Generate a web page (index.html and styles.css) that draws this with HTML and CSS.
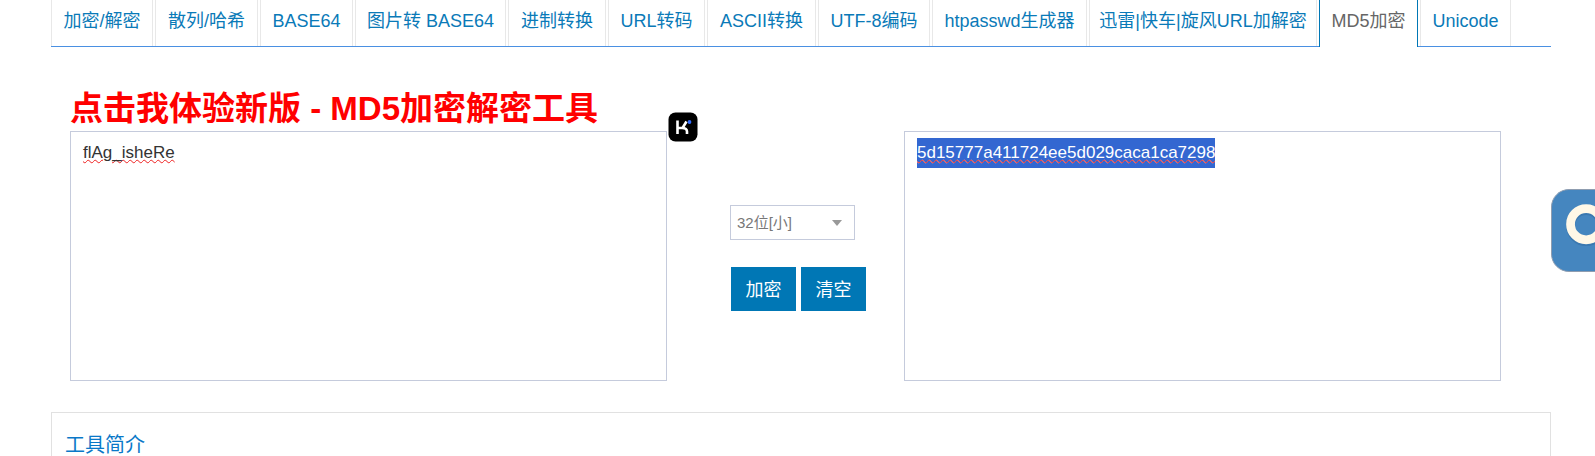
FILE: index.html
```html
<!DOCTYPE html>
<html lang="zh-CN">
<head>
<meta charset="utf-8">
<title>MD5加密</title>
<link rel="stylesheet" href="styles.css">
</head>
<body>
<main class="page">
  <nav class="tabs">
    <a class="tab" href="#">加密/解密</a>
    <a class="tab" href="#">散列/哈希</a>
    <a class="tab" href="#">BASE64</a>
    <a class="tab" href="#">图片转 BASE64</a>
    <a class="tab" href="#">进制转换</a>
    <a class="tab" href="#">URL转码</a>
    <a class="tab" href="#">ASCII转换</a>
    <a class="tab" href="#">UTF-8编码</a>
    <a class="tab" href="#">htpasswd生成器</a>
    <a class="tab" href="#">迅雷|快车|旋风URL加解密</a>
    <a class="tab tab-active" href="#" aria-current="page">MD5加密</a>
    <a class="tab" href="#">Unicode</a>
  </nav>

  <section class="tool">
    <h1 class="title"><a class="title-link" href="#">点击我体验新版 - MD5加密解密工具</a></h1>
    <div class="editor">
      <div class="pane">
        <textarea class="box" aria-label="原文" spellcheck="false">flAg_isheRe</textarea>
        <svg class="assist" viewBox="0 0 30 30" aria-hidden="true">
          <rect x="0.5" y="0.5" width="29" height="29" rx="7" fill="#000"/>
          <path d="M9.500 8.500v13.500M9.500 16h5.500M18.500 9.500l-4 6.500M14 16q5 0 5 3.500v2.500" fill="none" stroke="#fff" stroke-width="2.600"/>
          <circle cx="21.500" cy="10" r="1.900" fill="#2f6bff"/>
        </svg>
      </div>
      <div class="controls">
        <select class="mode" aria-label="位数">
          <option>32位[小]</option>
          <option>32位[大]</option>
          <option>16位[小]</option>
          <option>16位[大]</option>
        </select>
        <div class="actions">
          <button class="btn" type="button">加密</button>
          <button class="btn" type="button">清空</button>
        </div>
      </div>
      <div class="pane">
        <textarea class="box" id="result" aria-label="结果" spellcheck="false">5d15777a411724ee5d029caca1ca7298</textarea>
      </div>
    </div>
  </section>

  <section class="intro">
    <h2 class="intro-title">工具简介</h2>
  </section>
</main>

<button class="widget" type="button" aria-label="搜索">
  <svg class="widget-icon" viewBox="0 0 82 82" aria-hidden="true">
    <circle cx="35" cy="36" r="16" fill="none" stroke="#3a78b0" stroke-width="9"/>
    <circle cx="35" cy="34" r="16" fill="none" stroke="#fff8e7" stroke-width="9"/>
  </svg>
</button>
<script src="script.js"></script>
</body>
</html>
```
FILE: styles.css
```css
* { box-sizing: border-box; }

body {
  margin: 0;
  background: #fff;
  color: #333;
  font-family: "Liberation Sans", "Noto Sans CJK SC", sans-serif;
  overflow: hidden;
}

.page { padding: 0 44px 0 51px; }

.tabs {
  display: grid;
  grid-template-columns:
    minmax(0, 104fr) minmax(0, 105fr) minmax(0, 95fr) minmax(0, 153fr)
    minmax(0, 100fr) minmax(0, 99fr) minmax(0, 111fr) minmax(0, 114fr)
    minmax(0, 157fr) minmax(0, 230fr) minmax(0, 101fr) minmax(0, 93fr)
    minmax(0, 38fr);
  height: 47px;
  border-bottom: 1px solid #4a90e2;
}

.tab {
  display: flex;
  justify-content: center;
  height: 46px;
  margin-right: 2px;
  border: solid #e8e8e8;
  border-width: 0 1px;
  color: #0a7ab8;
  font-size: 18px;
  line-height: 42px;
  white-space: nowrap;
  text-decoration: none;
}

.tab-active {
  height: 47px;
  border-color: #0077b5;
  background: #fff;
  color: #666;
}

.tool { padding: 40px 50px 31px 19px; }

.title {
  margin: 0;
  font-size: 33px;
  line-height: 44px;
}

.title-link { color: #f00; text-decoration: none; }

.editor { display: flex; }

.pane { position: relative; flex: 1; }

.box {
  display: block;
  width: 100%;
  height: 250px;
  padding: 6px 12px;
  border: 1px solid #c5cbdc;
  outline: none;
  resize: none;
  color: #333;
  font: 17px/30px "Liberation Sans", "Noto Sans CJK SC", sans-serif;
  text-decoration: underline wavy #e22 1px;
}

.box::selection {
  background: #3367d1;
  color: #fff;
  text-decoration: underline wavy #e22 1px;
}

.assist {
  position: absolute;
  top: -19px;
  right: -31px;
  width: 30px;
  height: 30px;
}

.controls {
  width: 237px;
  padding: 74px 0 0 63px;
}

.mode {
  appearance: none;
  display: block;
  width: 125px;
  height: 35px;
  padding: 0 6px;
  border: 1px solid #c5cbdc;
  border-radius: 0;
  background: #fff url("data:image/svg+xml,%3Csvg xmlns='http://www.w3.org/2000/svg' width='10' height='6'%3E%3Cpath d='M0 0h10L5 6z' fill='%23999'/%3E%3C/svg%3E") no-repeat right 12px center;
  color: #777;
  font: 15px "Liberation Sans", "Noto Sans CJK SC", sans-serif;
}

.actions {
  display: flex;
  gap: 5px;
  margin: 27px 0 0 1px;
}

.btn {
  width: 65px;
  height: 44px;
  padding: 0 0 2px;
  border: 0;
  background: #0077b5;
  color: #fff;
  font: 18px "Liberation Sans", "Noto Sans CJK SC", sans-serif;
}

.intro {
  padding: 16px 13px;
  border: 1px solid #e1e1e1;
}

.intro-title {
  margin: 0;
  color: #0a78c8;
  font-size: 20px;
  font-weight: 400;
  line-height: 32px;
}

.widget {
  position: fixed;
  top: 189px;
  right: -38px;
  width: 82px;
  height: 83px;
  padding: 0;
  border: 1px solid #8f9db0;
  border-radius: 18px;
  background: #4586bf;
}

.widget-icon { display: block; width: 100%; }
```
FILE: script.js
```js
const result = document.getElementById("result");
result.focus();
result.select();
```
